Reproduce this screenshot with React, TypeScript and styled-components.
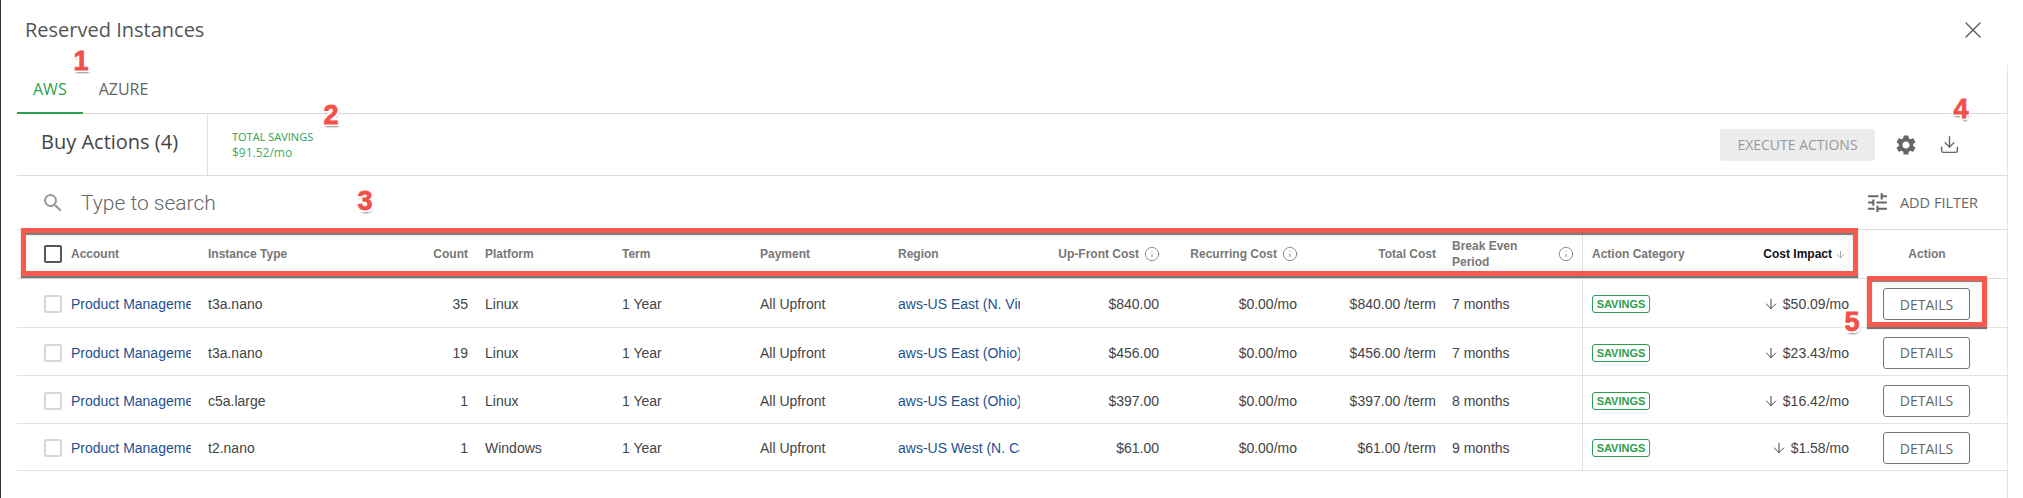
import React from 'react';
import styled, { createGlobalStyle } from 'styled-components';
import { ArrowDown, Download, Info, X } from 'lucide-react';
import { MdSearch, MdSettings, MdTune } from 'react-icons/md';

const GlobalStyle = createGlobalStyle`
  html, body {
    margin: 0;
    padding: 0;
    background: #fff;
  }
  * {
    box-sizing: border-box;
  }
`;

const COLUMNS = '54px 137px 210px 67px 137px 138px 138px 132px 138px 138px 139px 137px 158px 109px 158px';

const rows = [
  { height: 49, type: 't3a.nano', count: 35, platform: 'Linux', region: 'aws-US East (N. Virginia)', upfront: '$840.00', total: '$840.00', breakEven: '7 months', impact: '$50.09/mo' },
  { height: 48, type: 't3a.nano', count: 19, platform: 'Linux', region: 'aws-US East (Ohio)', upfront: '$456.00', total: '$456.00', breakEven: '7 months', impact: '$23.43/mo' },
  { height: 48, type: 'c5a.large', count: 1, platform: 'Linux', region: 'aws-US East (Ohio)', upfront: '$397.00', total: '$397.00', breakEven: '8 months', impact: '$16.42/mo' },
  { height: 47, type: 't2.nano', count: 1, platform: 'Windows', region: 'aws-US West (N. California)', upfront: '$61.00', total: '$61.00', breakEven: '9 months', impact: '$1.58/mo' },
];

export default function App() {
  return (
    <Page>
      <GlobalStyle />
      <TitleRow>
        <Title>Reserved Instances</Title>
        <X size={28} color="#555" strokeWidth={1.1} />
      </TitleRow>
      <Panel>
        <Tabs>
          <Tab $active>AWS</Tab>
          <Tab>AZURE</Tab>
        </Tabs>
        <Summary>
          <BuyActions>Buy Actions (4)</BuyActions>
          <Savings>
            <SavingsLabel>TOTAL SAVINGS</SavingsLabel>
            <SavingsValue>$91.52/mo</SavingsValue>
          </Savings>
          <SummaryTools>
            <ExecuteButton>EXECUTE ACTIONS</ExecuteButton>
            <MdSettings size={24} color="#666" />
            <DownloadIcon size={21} color="#666" strokeWidth={1.6} />
          </SummaryTools>
        </Summary>
        <SearchRow>
          <MdSearch size={24} color="#999" />
          <SearchInput placeholder="Type to search" readOnly />
          <AddFilter>
            <MdTune size={25} color="#666" />
            <span>ADD FILTER</span>
          </AddFilter>
        </SearchRow>
        <HeadRow>
          <CheckCell><Checkbox $dark /></CheckCell>
          <HeadCell>Account</HeadCell>
          <HeadCell>Instance Type</HeadCell>
          <HeadCell $right $pr={17}>Count</HeadCell>
          <HeadCell>Platform</HeadCell>
          <HeadCell>Term</HeadCell>
          <HeadCell>Payment</HeadCell>
          <HeadCell>Region</HeadCell>
          <HeadCell $right $pr={8}>Up-Front Cost<InfoIcon size={16} strokeWidth={1.1} /></HeadCell>
          <HeadCell $right $pr={8}>Recurring Cost<InfoIcon size={16} strokeWidth={1.1} /></HeadCell>
          <HeadCell $right $pr={9}>Total Cost</HeadCell>
          <BreakEvenHead>
            <span>Break Even<br />Period</span>
            <InfoIcon size={16} strokeWidth={1.1} />
          </BreakEvenHead>
          <CategoryHead>Action Category</CategoryHead>
          <SortedHead>Cost Impact<ArrowDown size={11} strokeWidth={1.5} color="#888" /></SortedHead>
          <ActionHead>Action</ActionHead>
        </HeadRow>
        {rows.map(row => (
          <BodyRow key={row.impact} $height={row.height}>
            <CheckCell><Checkbox /></CheckCell>
            <Cell><ClippedLink $width={120}>Product Management</ClippedLink></Cell>
            <Cell>{row.type}</Cell>
            <Cell $right $pr={17}>{row.count}</Cell>
            <Cell>{row.platform}</Cell>
            <Cell>1 Year</Cell>
            <Cell>All Upfront</Cell>
            <Cell><ClippedLink $width={122}>{row.region}</ClippedLink></Cell>
            <Cell $right $pr={9}>{row.upfront}</Cell>
            <Cell $right $pr={9}>$0.00/mo</Cell>
            <Cell $right $pr={9}>{row.total} /term</Cell>
            <BreakEvenCell>{row.breakEven}</BreakEvenCell>
            <CategoryCell><SavingsBadge>SAVINGS</SavingsBadge></CategoryCell>
            <ImpactCell><ArrowDown size={16} strokeWidth={1.5} />{row.impact}</ImpactCell>
            <ActionCell><DetailsButton>DETAILS</DetailsButton></ActionCell>
          </BodyRow>
        ))}
      </Panel>

      <HeaderCallout />
      <DetailsCallout />
      <Marker $x={70} $y={46}>1</Marker>
      <Marker $x={320} $y={100}>2</Marker>
      <Marker $x={354} $y={186}>3</Marker>
      <Marker $x={1950} $y={94}>4</Marker>
      <Marker $x={1841} $y={307}>5</Marker>
    </Page>
  );
}

const Page = styled.div`
  position: relative;
  width: 2023px;
  height: 498px;
  padding-left: 16px;
  overflow: hidden;
  background: #fff;
  border-left: 1px solid #333;
  font-family: 'Liberation Sans', Arial, sans-serif;
`;

const TitleRow = styled.div`
  display: flex;
  align-items: center;
  justify-content: space-between;
  height: 65px;
  width: 1991px;
  padding: 0 21px 6px 8px;
`;

const Title = styled.div`
  font-family: 'Open Sans', sans-serif;
  font-size: 20px;
  color: #555;
`;

const Panel = styled.div`
  width: 1991px;
  height: 433px;
  border-right: 1px solid #e4e4e4;
`;

const Tabs = styled.div`
  display: flex;
  height: 49px;
  border-bottom: 1px solid #dcdcdc;
`;

const Tab = styled.div<{ $active?: boolean }>`
  display: flex;
  align-items: center;
  height: 49px;
  padding: 1px 16px 0;
  font-family: 'Open Sans', sans-serif;
  font-size: 16px;
  color: ${p => (p.$active ? '#2e9e4f' : '#666')};
  border-bottom: 2px solid ${p => (p.$active ? '#2e9e4f' : 'transparent')};
`;

const Summary = styled.div`
  display: flex;
  align-items: stretch;
  height: 62px;
  border-bottom: 1px solid #dcdcdc;
`;

const BuyActions = styled.div`
  display: flex;
  align-items: center;
  width: 191px;
  padding: 0 0 7px 24px;
  border-right: 1px solid #e0e0e0;
  font-family: 'Open Sans', sans-serif;
  font-size: 20px;
  color: #444;
`;

const Savings = styled.div`
  display: flex;
  flex-direction: column;
  justify-content: center;
  gap: 1px;
  padding: 2px 0 0 24px;
  font-family: 'Open Sans', sans-serif;
  color: #2e9e4f;
`;

const SavingsLabel = styled.div`
  font-size: 11px;
  line-height: 14px;
`;

const SavingsValue = styled.div`
  font-size: 12px;
  line-height: 16px;
  color: #45a865;
`;

const SummaryTools = styled.div`
  display: flex;
  align-items: center;
  gap: 19px;
  margin-left: auto;
  padding-right: 47px;
`;

const DownloadIcon = styled(Download)`
  margin-left: 2px;
`;

const ExecuteButton = styled.div`
  display: flex;
  align-items: center;
  justify-content: center;
  width: 155px;
  height: 32px;
  border-radius: 3px;
  background: #ececec;
  font-family: 'Open Sans', sans-serif;
  font-size: 14px;
  color: #999;
`;

const SearchRow = styled.div`
  display: flex;
  align-items: center;
  height: 54px;
  padding: 0 29px 0 24px;
  border-bottom: 1px solid #dcdcdc;
`;

const SearchInput = styled.input`
  flex: 1;
  margin-left: 16px;
  padding: 0;
  border: none;
  outline: none;
  background: transparent;
  font-family: Roboto, sans-serif;
  font-weight: 300;
  font-size: 21px;
  &::placeholder {
    color: #666;
    opacity: 1;
  }
`;

const AddFilter = styled.div`
  display: flex;
  align-items: center;
  gap: 10px;
  font-family: 'Open Sans', sans-serif;
  font-size: 14.5px;
  color: #666;
`;

const HeadRow = styled.div`
  display: grid;
  grid-template-columns: ${COLUMNS};
  height: 49px;
  border-bottom: 1px solid #dcdcdc;
`;

const BodyRow = styled.div<{ $height: number }>`
  display: grid;
  grid-template-columns: ${COLUMNS};
  height: ${p => p.$height}px;
  border-bottom: 1px solid #e2e2e2;
`;

const CheckCell = styled.div`
  display: flex;
  align-items: center;
  padding-left: 27px;
`;

const BodyCheckOffset = 2;

const Checkbox = styled.div<{ $dark?: boolean }>`
  width: 18px;
  height: 18px;
  border-radius: 2px;
  margin-top: ${p => (p.$dark ? 0 : BodyCheckOffset)}px;
  border: ${p => (p.$dark ? '2px solid #555' : '2px solid #d8d8d8')};
`;

const Cell = styled.div<{ $right?: boolean; $pr?: number }>`
  display: flex;
  align-items: center;
  justify-content: ${p => (p.$right ? 'flex-end' : 'flex-start')};
  padding-top: 2px;
  padding-right: ${p => p.$pr ?? 0}px;
  font-size: 14px;
  color: #444;
  white-space: nowrap;
  min-width: 0;
`;

const HeadCell = styled(Cell)`
  padding-top: 0;
  font-size: 12px;
  font-weight: 700;
  color: #777;
`;

const InfoIcon = styled(Info)`
  margin-left: 5px;
  color: #666;
`;

const BreakEvenHead = styled(HeadCell)`
  justify-content: space-between;
  padding: 0 8px 0 7px;
  line-height: 16px;
  white-space: normal;
`;

const CategoryHead = styled(HeadCell)`
  padding-left: 9px;
  border-left: 1px solid #e2e2e2;
`;

const SortedHead = styled(HeadCell)`
  justify-content: flex-end;
  gap: 3px;
  padding-right: 3px;
  color: #111;
`;

const ActionHead = styled(HeadCell)`
  justify-content: center;
  padding-right: 2px;
`;

const ClippedLink = styled.div<{ $width: number }>`
  width: ${p => p.$width}px;
  overflow: hidden;
  color: #1f4f8f;
`;

const BreakEvenCell = styled(Cell)`
  padding-left: 7px;
`;

const CategoryCell = styled(Cell)`
  padding-left: 9px;
  border-left: 1px solid #e2e2e2;
`;

const SavingsBadge = styled.div`
  display: flex;
  align-items: center;
  justify-content: center;
  width: 58px;
  height: 18px;
  border: 1px solid #2e9e4f;
  border-radius: 3px;
  font-size: 11px;
  font-weight: 700;
  color: #2e9e4f;
`;

const ImpactCell = styled(Cell)`
  justify-content: flex-end;
  gap: 4px;
`;

const ActionCell = styled(Cell)`
  justify-content: center;
  padding-right: 3px;
`;

const DetailsButton = styled.div`
  display: flex;
  align-items: center;
  justify-content: center;
  width: 87px;
  height: 32px;
  border: 1px solid #777;
  border-radius: 3px;
  font-family: 'Open Sans', sans-serif;
  font-size: 14px;
  color: #666;
`;

const HeaderCallout = styled.div`
  position: absolute;
  left: 20px;
  top: 228px;
  width: 1837px;
  height: 48px;
  border: 5px solid #f8594e;
  box-shadow: 0 2px 1px #777, inset 0 2px 1px #777;
`;

const DetailsCallout = styled.div`
  position: absolute;
  left: 1866px;
  top: 276px;
  width: 120px;
  height: 51px;
  border: 5px solid #f8594e;
  box-shadow: 0 2px 1px #777, inset 0 1px 1px #777;
`;

const Marker = styled.div<{ $x: number; $y: number }>`
  position: absolute;
  left: ${p => p.$x}px;
  top: ${p => p.$y}px;
  width: 20px;
  text-align: center;
  font-size: 27px;
  line-height: 30px;
  font-weight: 700;
  color: #f4504a;
  -webkit-text-stroke: 0.8px #f4504a;
  text-shadow: -2px 0 #fff, 2px 0 #fff, 0 -2px #fff, 0 2px #fff, 2px 2px #fff, -2px 2px #fff, 2px -2px #fff, -2px -2px #fff, 1px 3px 2px rgba(90, 90, 90, 0.7);
`;
